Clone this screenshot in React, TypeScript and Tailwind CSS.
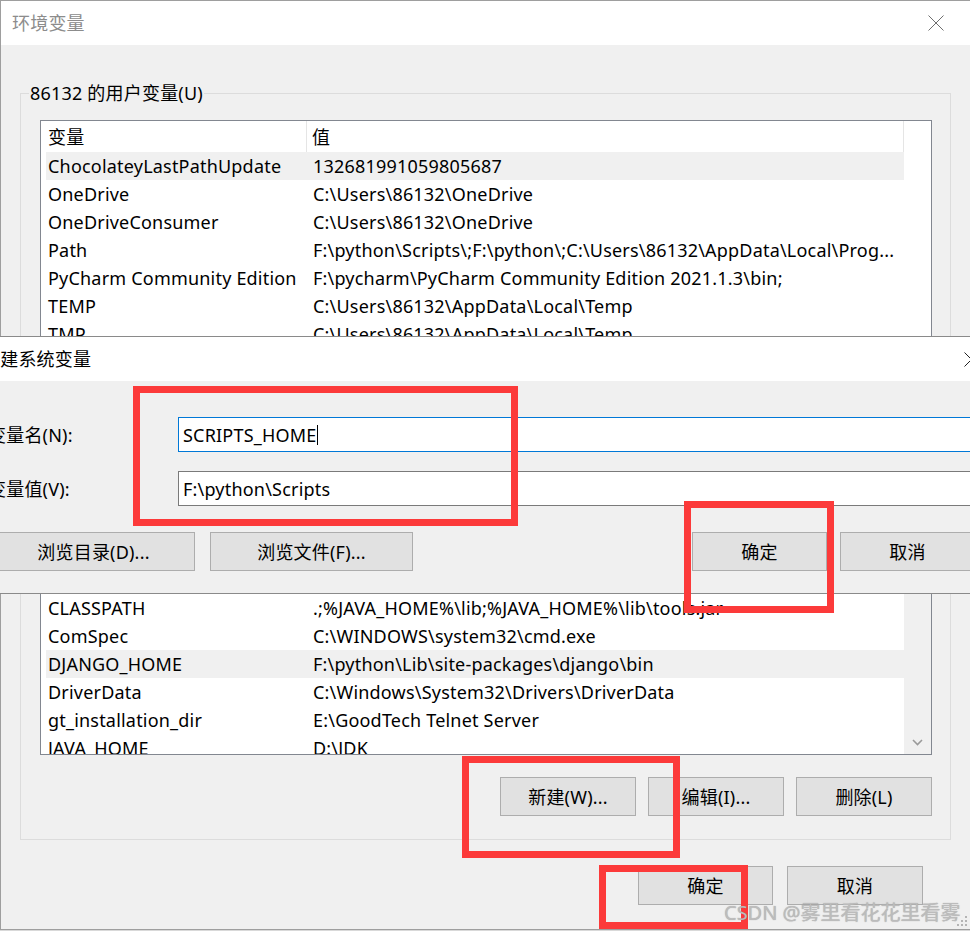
import React from 'react';

const userVars: [string, string][] = [
  ['ChocolateyLastPathUpdate', '132681991059805687'],
  ['OneDrive', 'C:\\Users\\86132\\OneDrive'],
  ['OneDriveConsumer', 'C:\\Users\\86132\\OneDrive'],
  ['Path', 'F:\\python\\Scripts\\;F:\\python\\;C:\\Users\\86132\\AppData\\Local\\Prog...'],
  ['PyCharm Community Edition', 'F:\\pycharm\\PyCharm Community Edition 2021.1.3\\bin;'],
  ['TEMP', 'C:\\Users\\86132\\AppData\\Local\\Temp'],
  ['TMP', 'C:\\Users\\86132\\AppData\\Local\\Temp'],
];

const systemVars: [string, string][] = [
  ['CLASSPATH', '.;%JAVA_HOME%\\lib;%JAVA_HOME%\\lib\\tools.jar'],
  ['ComSpec', 'C:\\WINDOWS\\system32\\cmd.exe'],
  ['DJANGO_HOME', 'F:\\python\\Lib\\site-packages\\django\\bin'],
  ['DriverData', 'C:\\Windows\\System32\\Drivers\\DriverData'],
  ['gt_installation_dir', 'E:\\GoodTech Telnet Server'],
  ['JAVA_HOME', 'D:\\JDK'],
  ['NUMBER_OF_PROCESSORS', '8'],
];

const Btn = ({ children, className = '' }: { children: React.ReactNode; className?: string }) => (
  <div className={`h-[39px] flex items-center justify-center bg-[#e1e1e1] border border-[#adadad] text-[18px] text-black ${className}`}>
    {children}
  </div>
);

const VarList = ({ rows, selected, height, scrollbar }: { rows: [string, string][]; selected: number; height: string; scrollbar?: boolean }) => (
  <div className={`bg-white border border-[#828790] overflow-hidden flex ${height}`}>
    <div className="flex-1 flex flex-col pl-[5px]">
      <div className="flex h-[31px] shrink-0 items-center">
        <div className="w-[261px] h-full pl-[2px] flex items-center border-r border-[#e5e5e5]">变量</div>
        <div className="flex-1 h-full pl-[5px] flex items-center border-r border-[#e5e5e5]">值</div>
      </div>
      {rows.map(([k, v], i) => (
        <div key={k} className={`flex h-[28px] shrink-0 items-center whitespace-nowrap ${i === selected ? 'bg-[#f0f0f0]' : ''}`}>
          <div className="w-[262px] pl-[2px]">{k}</div>
          <div className="flex-1 pl-[5px]">{v}</div>
        </div>
      ))}
    </div>
    <div className={`w-[27px] flex flex-col justify-end items-center pb-[8px] ${scrollbar ? 'bg-[#f0f0f0]' : 'bg-white'}`}>
      {scrollbar && (
        <svg width="11" height="7" viewBox="0 0 11 7">
          <path d="M1 1 L5.5 5.5 L10 1" fill="none" stroke="#9a9a9a" strokeWidth="1.6" />
        </svg>
      )}
    </div>
  </div>
);

const RedBox = ({ className }: { className: string }) => (
  <div className={`absolute border-[7px] border-[#fc3a3a] ${className}`} />
);

export default function App() {
  return (
    <div className="relative w-[970px] h-[931px] overflow-hidden bg-[#d9d9d9] font-['Noto_Sans','Noto_Sans_CJK_SC',sans-serif] text-[18px] tracking-[0.2px] text-black leading-none">
      {/* 环境变量 main window */}
      <div className="w-[976px] h-[930px] flex flex-col border-l border-t border-b border-[#9e9e9e] bg-[#f0f0f0]">
        <div className="h-[44px] shrink-0 bg-white flex items-center justify-between pl-[11px] pr-[32px]">
          <span className="text-[#8c8c8c]">环境变量</span>
          <svg width="16" height="16" viewBox="0 0 16 16">
            <path d="M0.5 0.5 L15.5 15.5 M15.5 0.5 L0.5 15.5" stroke="#6e6e6e" strokeWidth="1" />
          </svg>
        </div>

        <div className="flex-1 flex flex-col pl-[19px] pr-[25px]">
          <fieldset className="mt-[36px] border border-[#dcdcdc] pl-[19px] pr-[18px] pb-[18px]">
            <legend className="-ml-[11px] px-[1px] leading-[24px]">86132 的用户变量(U)</legend>
            <div className="pt-[15px]">
              <VarList rows={userVars} selected={0} height="h-[291px]" />
            </div>
            <div className="flex justify-end gap-[12px] mt-[21px]">
              <Btn className="w-[136px]">新建(N)...</Btn>
              <Btn className="w-[136px]">编辑(E)...</Btn>
              <Btn className="w-[136px]">删除(D)</Btn>
            </div>
          </fieldset>

          <fieldset className="mt-[33px] border border-[#dcdcdc] pl-[19px] pr-[18px] pb-[23px]">
            <legend className="-ml-[11px] px-[1px] leading-[24px]">系统变量(S)</legend>
            <div className="pt-[15px]">
              <VarList rows={systemVars} selected={2} height="h-[193px]" scrollbar />
            </div>
            <div className="flex justify-end gap-[12px] mt-[22px]">
              <Btn className="w-[136px]">新建(W)...</Btn>
              <Btn className="w-[136px]">编辑(I)...</Btn>
              <Btn className="w-[136px]">删除(L)</Btn>
            </div>
          </fieldset>

          <div className="flex justify-end gap-[14px] mt-[26px] pr-[28px]">
            <Btn className="w-[135px]">确定</Btn>
            <Btn className="w-[136px]">取消</Btn>
          </div>
        </div>
      </div>

      {/* 新建系统变量 dialog, lying over the main window */}
      <div className="absolute left-[-29px] top-[336px] w-[1030px] border-t border-b border-[#8a8a8a] bg-[#f0f0f0]">
        <div className="h-[44px] bg-white flex items-center justify-between pl-[11px] pr-[22px]">
          <span>新建系统变量</span>
          <svg width="15" height="15" viewBox="0 0 15 15">
            <path d="M0.5 0.5 L14.5 14.5 M14.5 0.5 L0.5 14.5" stroke="#222" strokeWidth="1" />
          </svg>
        </div>
        <div className="flex flex-col pt-[36px] pb-[22px] pl-[17px] pr-[26px]">
          <div className="flex items-center">
            <span className="w-[190px]">变量名(N):</span>
            <div className="flex-1 h-[35px] bg-white border border-[#0078d7] flex items-center pl-[4px]">
              SCRIPTS_HOME
              <span className="ml-[1px] w-[1px] h-[20px] bg-black" />
            </div>
          </div>
          <div className="flex items-center mt-[19px]">
            <span className="w-[190px]">变量值(V):</span>
            <div className="flex-1 h-[35px] bg-white border border-[#7a7a7a] flex items-center pl-[4px]">
              F:\python\Scripts
            </div>
          </div>
          <div className="flex items-center gap-[15px] mt-[26px] pl-[4px]">
            <Btn className="w-[203px]">浏览目录(D)...</Btn>
            <Btn className="w-[203px]">浏览文件(F)...</Btn>
            <div className="flex-1" />
            <Btn className="w-[135px]">确定</Btn>
            <Btn className="w-[135px] ml-[-2px]">取消</Btn>
          </div>
        </div>
      </div>

      {/* annotations */}
      <RedBox className="left-[133px] top-[386px] w-[385px] h-[140px]" />
      <RedBox className="left-[684px] top-[501px] w-[150px] h-[112px]" />
      <RedBox className="left-[462px] top-[756px] w-[218px] h-[102px]" />
      <RedBox className="left-[599px] top-[865px] w-[149px] h-[64px]" />

      {/* resize grip */}
      <svg className="absolute left-[955px] top-[914px]" width="14" height="14" viewBox="0 0 14 14">
        <g fill="#b4b4b4">
          <rect x="10" y="2" width="2" height="2" />
          <rect x="6" y="6" width="2" height="2" />
          <rect x="10" y="6" width="2" height="2" />
          <rect x="2" y="10" width="2" height="2" />
          <rect x="6" y="10" width="2" height="2" />
          <rect x="10" y="10" width="2" height="2" />
        </g>
      </svg>

      <div className="absolute left-[724px] top-[901px] text-[20px] leading-[24px] tracking-normal text-[#bcbcbc] whitespace-nowrap [text-shadow:0_0_1px_rgba(120,120,120,0.6)]">
        CSDN @雾里看花花里看雾
      </div>
    </div>
  );
}
